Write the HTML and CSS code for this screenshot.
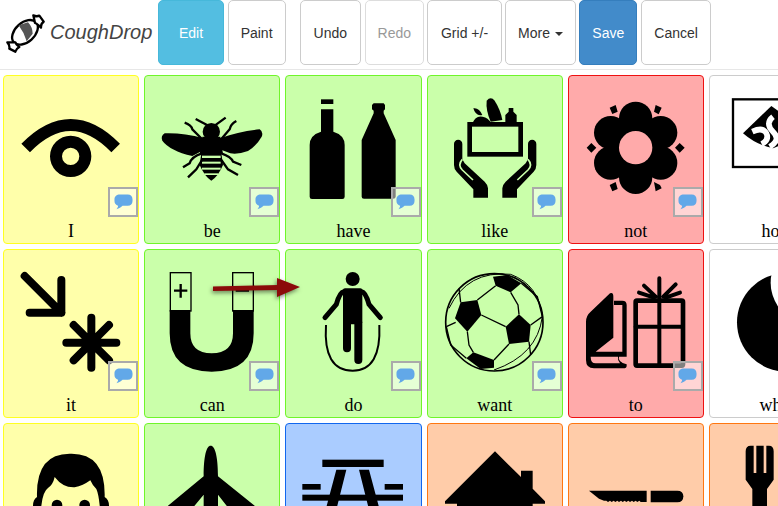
FILE: index.html
```html
<!DOCTYPE html>
<html lang="en">
<head>
  <meta charset="UTF-8">
  <meta name="viewport" content="width=device-width, initial-scale=1.0">
  <title>CoughDrop</title>
  <link rel="stylesheet" href="styles.css">
</head>
<body>
  <svg class="defs" width="0" height="0">
    <symbol id="bubble" viewBox="0 0 20 20">
      <path d="M6 1.500h8.500c3 0 5 2 5 5v2c0 3-2 5-5 5H9c-1.500 1.500-3.500 3-6.500 3.500 1-1 1.800-2.500 1.800-3.700C2 13 .5 11 .5 8.500v-2c0-3 2.500-5 5.500-5z"/>
    </symbol>
  </svg>

  <!-- Top toolbar -->
  <header class="toolbar">
    <div class="brand">
      <svg class="brand-icon" viewBox="15 40 120 120">
        <ellipse cx="75" cy="98" rx="45" ry="29" transform="rotate(-42 75 98)" fill="#fff" stroke="#000" stroke-width="7"/>
        <path d="M56 77 L84 68 Q98 83 98 102 L80 125 Q72 98 56 77Z" fill="#555"/>
        <path d="M105 70 L100 47 Q110 52 118 48 L131 66 Q122 72 123 84 Q112 72 105 70Z" fill="#fff" stroke="#000" stroke-width="7" stroke-linejoin="round"/>
        <path d="M46 128 L22 128 Q30 136 28 147 L46 156 Q50 146 58 142 Q48 136 46 128Z" fill="#fff" stroke="#000" stroke-width="7" stroke-linejoin="round"/>
      </svg>
      <span class="brand-name">CoughDrop</span>
    </div>
    <button class="btn btn-edit">Edit</button>
    <button class="btn btn-paint">Paint</button>
    <button class="btn btn-undo">Undo</button>
    <button class="btn btn-redo">Redo</button>
    <button class="btn btn-wide">Grid +/-</button>
    <button class="btn">More <span class="caret"></span></button>
    <button class="btn btn-save">Save</button>
    <button class="btn btn-wide">Cancel</button>
  </header>
  <div class="toolbar-line"></div>

  <!-- Board -->
  <main class="board">
    <div class="tile yellow">
      <svg class="tile-icon" viewBox="13 18 402 384">
        <path d="M78 234Q213 96 348 234" fill="none" stroke="#000" stroke-width="36"/>
        <circle cx="213" cy="259" r="44" fill="none" stroke="#000" stroke-width="36"/>
      </svg>
      <div class="tile-label">I</div>
      <div class="say"><svg class="say-icon"><use href="#bubble"/></svg></div>
    </div>

    <div class="tile green">
      <svg class="tile-icon" viewBox="436 18 402 384">
        <circle cx="635" cy="185" r="26"/>
        <path d="M608 200H662L670 252H600Z"/>
        <path d="M612 205Q550 188 495 190Q482 198 488 212Q510 242 578 258L612 240Z"/>
        <path d="M660 205Q720 183 780 178Q792 186 786 200Q770 228 745 243Q715 254 692 250L660 238Z"/>
        <path d="M605 250H665L670 285Q655 320 635 332Q615 320 600 285Z"/>
        <g class="cut"><rect x="607" y="257" width="56" height="7"/><rect x="607" y="275" width="56" height="6"/><rect x="607" y="293" width="56" height="6"/><rect x="614" y="310" width="42" height="5"/></g>
        <path d="M632 170L588 147M645 167L678 143M607 207L578 178Q575 165 555 158M665 207L690 178Q693 162 710 153M607 250Q575 260 570 280L550 292M665 250Q695 260 700 275L725 285M607 270L590 298 565 322M665 270L685 298 715 315" fill="none" stroke="#000" stroke-width="7"/>
      </svg>
      <div class="tile-label">be</div>
      <div class="say"><svg class="say-icon"><use href="#bubble"/></svg></div>
    </div>

    <div class="tile green">
      <svg class="tile-icon" viewBox="19 18 402 384">
        <rect x="124" y="88" width="37" height="14"/>
        <path d="M124 118H161V185Q195 195 195 225V380Q195 387 188 387H97Q90 387 90 380V225Q90 195 124 185Z"/>
        <path d="M282 100H312L316 105V118L312 122V130L348 210V380Q348 386 340 386H253Q246 386 246 380V210L282 130V122L277 118V105Z"/>
      </svg>
      <div class="tile-label">have</div>
      <div class="say"><svg class="say-icon"><use href="#bubble"/></svg></div>
    </div>

    <div class="tile green">
      <svg class="tile-icon" viewBox="442 18 402 384">
        <rect x="567" y="163" width="153" height="90" fill="none" stroke="#000" stroke-width="14"/>
        <path d="M618 92Q630 78 642 92Q660 120 665 150L630 155Q615 120 618 92Z"/>
        <path d="M578 115Q595 112 605 135Q585 140 578 115Z"/>
        <path d="M575 160Q585 135 606 140Q622 142 632 160Z"/>
        <path d="M674 160V135L684 125V114H698V125L708 135V160Z"/>
        <g id="hand">
          <path d="M520 222a12.500 12.500 0 0 1 25 0V268L552 280 612 335Q622 345 622 355V383H578V358L528 305Q520 297 520 285Z"/>
          <path class="cut-line" d="M545 268Q530 285 545 300L577 330"/>
        </g>
        <use href="#hand" transform="translate(1287 0) scale(-1 1)"/>
      </svg>
      <div class="tile-label">like</div>
      <div class="say"><svg class="say-icon"><use href="#bubble"/></svg></div>
    </div>

    <div class="tile red">
      <svg class="tile-icon" viewBox="25 18 402 384">
        <circle cx="225" cy="145" r="50"/><circle cx="300" cy="188" r="50"/><circle cx="300" cy="279" r="50"/>
        <circle cx="225" cy="322" r="50"/><circle cx="150" cy="279" r="50"/><circle cx="150" cy="188" r="50"/>
        <circle cx="225" cy="233" r="60"/>
        <circle class="cut" cx="225" cy="233" r="50"/>
        <path d="M78 233L92 219 107 233 92 248ZM343 233L357 219 372 233 357 248ZM147 113L165 105 171 125 155 132ZM280 125L285 105 303 113 294 133ZM147 345L165 336 171 357 155 364ZM280 336L298 345 303 355 285 364Z"/>
      </svg>
      <div class="tile-label">not</div>
      <div class="say"><svg class="say-icon"><use href="#bubble"/></svg></div>
    </div>

    <div class="tile white">
      <svg class="tile-icon" viewBox="451 18 402 384">
        <rect x="520" y="88" width="262" height="203" fill="none" stroke="#000" stroke-width="7"/>
        <path d="M550 190L635 108 752 190 640 235Q590 225 550 190Z"/>
        <path d="M578 185Q610 170 620 190T606 222M640 140Q615 160 640 185T630 230" fill="none" stroke="#fff" stroke-width="17"/>
      </svg>
      <div class="tile-label">how</div>
    </div>

    <div class="tile yellow">
      <svg class="tile-icon" viewBox="13 15 402 384">
        <path d="M75 93L185 203M185 105V203H90" fill="none" stroke="#000" stroke-width="24" stroke-linecap="round" stroke-linejoin="round"/>
        <path d="M275 218V368M200 293H350M222 240L328 346M328 240L222 346" fill="none" stroke="#000" stroke-width="24" stroke-linecap="round"/>
      </svg>
      <div class="tile-label">it</div>
      <div class="say"><svg class="say-icon"><use href="#bubble"/></svg></div>
    </div>

    <div class="tile green">
      <svg class="tile-icon" viewBox="436 15 402 384">
        <rect x="512" y="83" width="62" height="115" fill="none" stroke="#000" stroke-width="4"/>
        <rect x="699" y="83" width="62" height="115" fill="none" stroke="#000" stroke-width="4"/>
        <path d="M510 195H572V265Q572 325 636 325Q700 325 700 265V195H762V265Q762 380 636 380Q510 380 510 265Z"/>
        <path d="M543 117V158M523 137H563M708 137H748" fill="none" stroke="#000" stroke-width="7"/>
      </svg>
      <div class="tile-label">can</div>
      <div class="say"><svg class="say-icon"><use href="#bubble"/></svg></div>
    </div>

    <div class="tile green">
      <svg class="tile-icon" viewBox="19 15 402 384">
        <circle cx="219" cy="102" r="21"/>
        <rect x="190" y="130" width="58" height="108" rx="6"/>
        <path d="M202 235V310M236 235V345" fill="none" stroke="#000" stroke-width="24" stroke-linecap="round"/>
        <path d="M192 140Q180 142 170 178L136 218M246 140Q258 142 268 178L302 218" fill="none" stroke="#000" stroke-width="15" stroke-linecap="round"/>
        <path d="M139 240Q130 377 219 377Q305 377 299 240" fill="none" stroke="#000" stroke-width="6"/>
      </svg>
      <div class="tile-label">do</div>
      <div class="say"><svg class="say-icon"><use href="#bubble"/></svg></div>
    </div>

    <div class="tile green">
      <svg class="tile-icon" viewBox="442 15 402 384">
        <circle cx="641" cy="232" r="146" fill="none" stroke="#000" stroke-width="5"/>
        <path d="M505 190Q560 75 690 88Q775 120 785 215Q770 330 640 375" fill="none" stroke="#000" stroke-width="3"/>
        <path d="M523 220L540 172 590 165 602 210 560 260Z"/>
        <path d="M675 245L715 208 750 240 745 290 685 297Z"/>
        <path d="M637 95L680 90 722 115 690 142 645 122Z"/>
        <path d="M557 340L578 322 640 345 640 368 600 372Z"/>
        <path d="M602 210L675 245M560 260L565 300 578 322M590 165L645 122M690 142L712 180 715 208M685 297L640 345M525 232L497 245M540 172L535 130M722 115L770 155 785 215M750 240L785 215M745 290L750 330M497 245L510 300 557 340" fill="none" stroke="#000" stroke-width="4"/>
      </svg>
      <div class="tile-label">want</div>
      <div class="say"><svg class="say-icon"><use href="#bubble"/></svg></div>
    </div>

    <div class="tile red">
      <svg class="tile-icon" viewBox="25 15 402 384">
        <path d="M148 145Q158 140 158 155V278L105 320H185V180H160V167H185Q198 167 198 180V335H175Q170 350 198 358V362Q198 370 188 370H100Q76 370 76 345V230Q76 212 90 200Z"/>
        <path class="cut" d="M90 335H172Q170 345 178 355H105Q90 355 90 335Z"/>
        <rect x="225" y="167" width="142" height="195" rx="4" fill="none" stroke="#000" stroke-width="14"/>
        <path d="M296 100V362M225 245H367M250 122L285 155M345 118L308 155M358 143L315 158M235 143L280 158" fill="none" stroke="#000" stroke-width="12" stroke-linecap="round"/>
      </svg>
      <div class="tile-label">to</div>
      <div class="say"><svg class="say-icon"><use href="#bubble"/></svg></div>
    </div>

    <div class="tile white">
      <svg class="tile-icon" viewBox="451 15 402 384">
        <circle cx="680" cy="232" r="148"/>
        <path d="M637 82Q622 140 662 195L840 195V60Z" fill="#fff"/>
      </svg>
      <div class="tile-label">what</div>
    </div>

    <div class="tile yellow">
      <svg class="tile-icon" viewBox="13 13 402 384">
        <path d="M100 258Q100 240 112 232Q108 100 213 102Q318 100 315 232Q328 240 328 258V300H100Z"/>
        <path class="cut" d="M125 300V258Q130 215 145 205Q160 195 165 172Q190 205 225 203Q250 198 272 182Q280 200 290 208Q300 230 303 300Z"/>
        <circle cx="172" cy="256" r="16"/><circle cx="255" cy="256" r="16"/>
      </svg>
    </div>

    <div class="tile green">
      <svg class="tile-icon" viewBox="436 13 402 384">
        <path d="M612 170C612 110 620 78 633 78C646 78 655 110 655 170L765 258V270H690L655 225V300H612V225L575 270H505V258Z"/>
      </svg>
    </div>

    <div class="tile blue">
      <svg class="tile-icon" viewBox="859 13 402 384">
        <rect x="968" y="120" width="184" height="22"/>
        <rect x="908" y="193" width="55" height="17"/>
        <rect x="1155" y="193" width="55" height="17"/>
        <rect x="908" y="225" width="302" height="18"/>
        <path d="M1010 150H1040L1010 270H978ZM1078 150H1108L1140 270H1108Z"/>
      </svg>
    </div>

    <div class="tile orange">
      <svg class="tile-icon" viewBox="111 13 402 384">
        <path d="M312 95L390 172V153H425V207L462 245V252H425V300H198V252H162V245Z"/>
      </svg>
    </div>

    <div class="tile orange">
      <svg class="tile-icon" viewBox="535 13 402 384">
        <path d="M595 213H768V247H750L746 243 740 247 735 243 729 247 724 243 718 247 713 243 707 247 702 243 696 247 691 243 685 247 680 243 674 247 669 243 663 247 658 243 652 247 647 243 640 243 625 237Z"/>
        <path d="M780 213H860Q878 213 878 230Q878 248 860 248H780Z"/>
      </svg>
    </div>

    <div class="tile orange">
      <svg class="tile-icon" viewBox="961 13 402 384">
        <path d="M1068 95Q1068 78 1083 78H1092V160H1100V78H1122V160H1130V78H1138Q1152 78 1152 95V180L1132 208V300H1088V208L1068 180Z"/>
      </svg>
    </div>
  </main>

  <!-- Pointer arrow drawn over the board -->
  <svg class="pointer" viewBox="0 0 90 24">
    <path d="M1 11.500L66 10V15L1 16Z"/>
    <path d="M65 3L88 12 65 22Z"/>
  </svg>
</body>
</html>
```

FILE: styles.css
```css
body, html {
  margin: 0;
  padding: 0;
  height: 100%;
  overflow: hidden;
  background-color: #fff;
}

.defs {
  position: absolute;
}

/* Toolbar */
.toolbar {
  display: flex;
  height: 65px;
  gap: 3.5px;
  font-family: "Liberation Sans", Arial, sans-serif;
}

.brand {
  display: flex;
  align-items: center;
  width: 154px;
  margin-right: 0.5px;
  padding-left: 5px;
  box-sizing: border-box;
}

.brand-icon {
  width: 40px;
  height: 40px;
  flex-shrink: 0;
  margin-top: 1px;
}

.brand-name {
  margin-left: 5px;
  font-size: 20px;
  font-style: italic;
  color: #444;
}

.btn {
  padding: 0 12px;
  font-family: inherit;
  font-size: 14px;
  color: #333;
  background-color: #fff;
  border: 1px solid #ccc;
  border-radius: 5px;
}

.btn-wide {
  padding: 0 12.5px;
}

.btn-edit {
  padding: 0 20px;
  color: #fff;
  background-color: #53bee1;
  border-color: #46b8da;
}

.btn-paint {
  margin-right: 10.5px;
}

.btn-undo {
  padding: 0 13px;
}

.btn-redo {
  color: #999;
  border-color: #ddd;
}

.btn-save {
  color: #fff;
  background-color: #428bca;
  border-color: #357ebd;
}

.caret {
  display: inline-block;
  margin-left: 1px;
  vertical-align: middle;
  border-top: 4px solid #333;
  border-left: 4px solid transparent;
  border-right: 4px solid transparent;
}

.toolbar-line {
  height: 1px;
  margin-top: 4px;
  background-color: #e7e7e7;
}

/* Board */
.board {
  display: grid;
  grid-template-columns: repeat(6, 136.2px);
  grid-auto-rows: 169px;
  gap: 5px;
  padding: 5px 0 0 3px;
}

.tile {
  position: relative;
  display: flex;
  flex-direction: column;
  box-sizing: border-box;
  border: 1px solid #ccc;
  border-radius: 4px;
  background-color: var(--tile-bg);
}

.tile.yellow { --tile-bg: #ffffaa; border-color: #ffff22; }
.tile.green { --tile-bg: #caffaa; border-color: #70f52a; }
.tile.red { --tile-bg: #ffaaaa; border-color: #ee1111; }
.tile.white { --tile-bg: #fff; border-color: #ccc; }
.tile.blue { --tile-bg: #aaccff; border-color: #1166ee; }
.tile.orange { --tile-bg: #ffcca9; border-color: #ff7711; }

.tile-icon {
  display: block;
  width: 134px;
  height: 128px;
  flex-shrink: 0;
}

.cut {
  fill: var(--tile-bg);
}

.cut-line {
  fill: none;
  stroke: var(--tile-bg);
  stroke-width: 5;
}

.tile-label {
  margin-top: auto;
  padding-bottom: 1px;
  font-family: "Liberation Serif", "Times New Roman", serif;
  font-size: 18px;
  line-height: 22px;
  text-align: center;
  color: #000;
}

/* Speech badge in the tile corner */
.say {
  position: absolute;
  right: 0;
  bottom: 26px;
  display: flex;
  align-items: center;
  justify-content: center;
  box-sizing: border-box;
  width: 30px;
  height: 30px;
  border: 2px solid #aaa;
  background-color: rgba(255, 255, 255, 0.5);
}

.say-icon {
  width: 19px;
  height: 19px;
  margin-top: 1px;
  fill: #62a8e8;
}

.pointer {
  position: absolute;
  left: 212px;
  top: 275px;
  width: 90px;
  height: 24px;
  fill: #8b0a0a;
  filter: drop-shadow(-1px 2px 2px rgba(0, 0, 0, 0.5));
}
```
